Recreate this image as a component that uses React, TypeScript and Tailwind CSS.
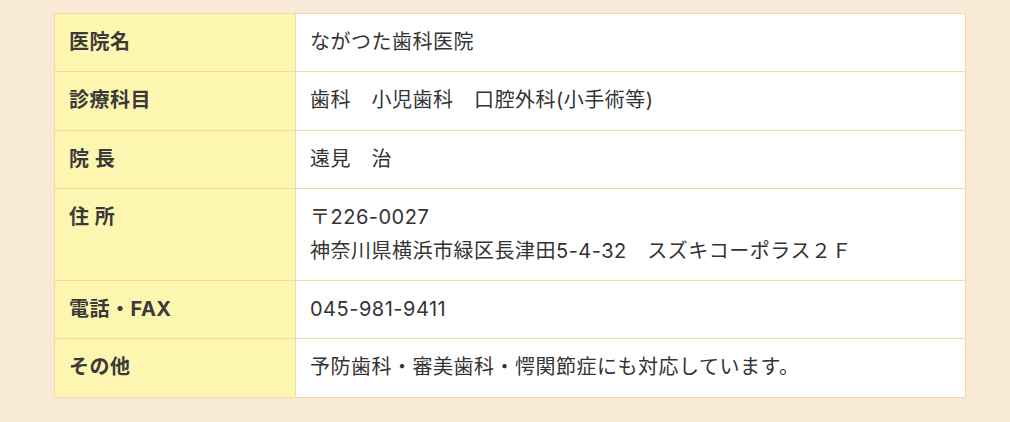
const rows: { label: string; value: string[] }[] = [
  { label: "医院名", value: ["ながつた歯科医院"] },
  { label: "診療科目", value: ["歯科　小児歯科　口腔外科(小手術等)"] },
  { label: "院 長", value: ["遠見　治"] },
  { label: "住 所", value: ["〒226-0027", "神奈川県横浜市緑区長津田5-4-32　スズキコーポラス２Ｆ"] },
  { label: "電話・FAX", value: ["045-981-9411"] },
  { label: "その他", value: ["予防歯科・審美歯科・愕関節症にも対応しています。"] },
];

const App = () => {
  return (
    <div
      className="min-h-[422px] w-[1010px] bg-[#f9ead7] pt-[13px] pl-[54px]"
      style={{ fontFamily: 'Inter, "Noto Sans CJK JP", sans-serif' }}
    >
      <table className="w-[912px] border-collapse border border-[#f6d9a2] text-[20px] leading-[33.4px] tracking-[0.5px]">
        <tbody>
          {rows.map((row) => (
            <tr key={row.label}>
              <th className="w-[241px] border border-[#f6d9a2] bg-[#fdf6b0] px-[14px] py-3 text-left align-top font-bold text-[#3a3a3a]">
                {row.label}
              </th>
              <td className="border border-[#f6d9a2] bg-white px-[14px] py-3 align-top text-[#333]">
                {row.value.map((line) => (
                  <div key={line}>{line}</div>
                ))}
              </td>
            </tr>
          ))}
        </tbody>
      </table>
    </div>
  );
};

export default App;
